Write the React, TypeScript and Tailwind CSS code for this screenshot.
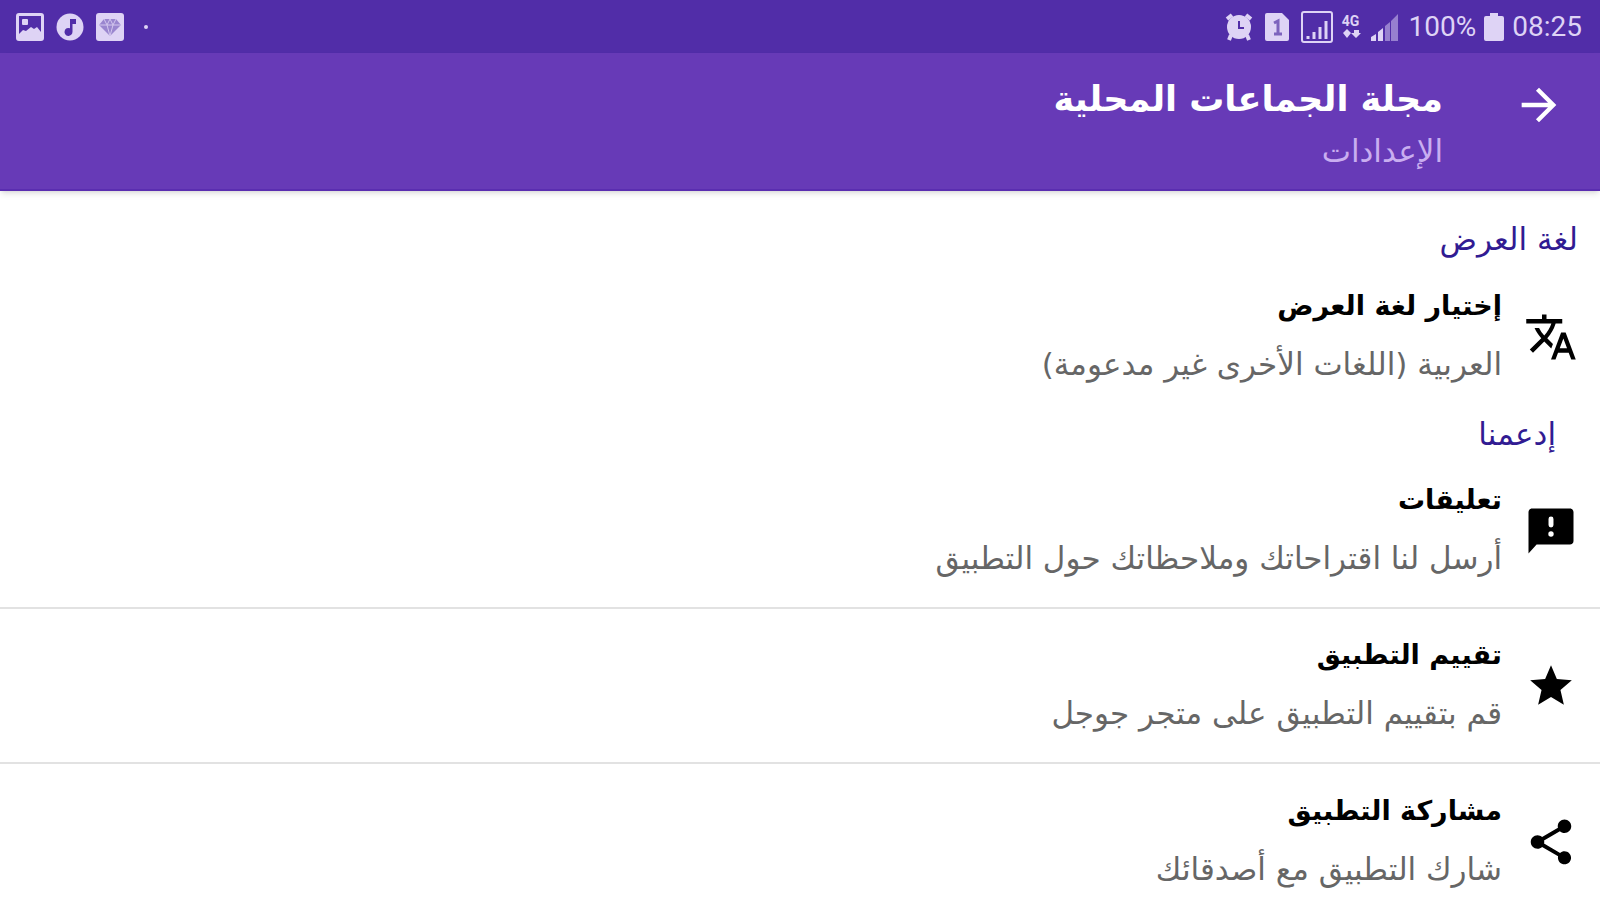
import type { ReactNode } from "react";
import { MdArrowForward, MdShare, MdStar, MdTranslate } from "react-icons/md";

type SettingItem = {
  title: string;
  summary: string;
  icon: ReactNode;
};

function FeedbackIcon() {
  return (
    <svg className="size-[54px]" viewBox="0 0 24 24">
      <path
        d="M20.400 2H3.600C2.700 2 2 2.700 2 3.600V22l3.600-4h14.800c.9 0 1.600-.7 1.600-1.600V3.600c0-.9-.7-1.600-1.600-1.600Z"
        fill="currentColor"
      />
      <path d="M12 6.700v2.600" stroke="white" strokeWidth="2.200" strokeLinecap="round" />
      <circle cx="12" cy="13.300" r="1.200" fill="white" />
    </svg>
  );
}

const displayItems: SettingItem[] = [
  {
    title: "إختيار لغة العرض",
    summary: "العربية (اللغات الأخرى غير مدعومة)",
    icon: <MdTranslate className="size-[54px]" />,
  },
];

const supportItems: SettingItem[] = [
  {
    title: "تعليقات",
    summary: "أرسل لنا اقتراحاتك وملاحظاتك حول التطبيق",
    icon: <FeedbackIcon />,
  },
  {
    title: "تقييم التطبيق",
    summary: "قم بتقييم التطبيق على متجر جوجل",
    icon: <MdStar className="mx-0.5 size-[50px]" />,
  },
  {
    title: "مشاركة التطبيق",
    summary: "شارك التطبيق مع أصدقائك",
    icon: <MdShare className="size-[54px]" />,
  },
];

function StatusBar() {
  return (
    <div
      dir="ltr"
      className="flex h-[53px] items-center justify-between bg-[#512da8] pr-[18px] pl-4 font-[Roboto,sans-serif] text-[28px] text-[#ded3f5]"
    >
      <div className="flex items-center gap-3">
        {/* Gallery */}
        <svg className="size-7" viewBox="0 0 28 28" fill="currentColor">
          <path
            fillRule="evenodd"
            d="M3 0h22a3 3 0 0 1 3 3v22a3 3 0 0 1-3 3H3a3 3 0 0 1-3-3V3a3 3 0 0 1 3-3Zm0 3v18l4-4 3 1 5-4 3 2 3-2 4 5V3Z"
          />
          <rect x="6" y="6" width="6" height="6" rx="1" />
        </svg>
        {/* Music */}
        <svg className="size-7" viewBox="0 0 28 28" fill="currentColor">
          <circle cx="14" cy="14" r="13.500" />
          <path d="M14 6v9.200a4 4 0 1 0 2.500 3.600V11h3.500V6Z" fill="#512da8" />
        </svg>
        {/* Gem */}
        <svg className="size-7" viewBox="0 0 28 28">
          <rect width="28" height="28" rx="3" fill="currentColor" />
          <path d="M8 6h12l5 6-11 11L3 12Z" fill="#9a86cf" />
          <path d="M3 12h22M8 6l3 6 3 11 3-11 3-6M11 12l3-6 3 6" stroke="#d3c6ee" fill="none" />
        </svg>
        <span className="ml-2 size-1 rounded-full bg-current" />
      </div>

      <div className="flex items-center gap-2">
        {/* Alarm */}
        <svg className="size-7" viewBox="0 0 28 28" fill="none" stroke="currentColor" strokeWidth="4">
          <circle cx="14" cy="14" r="12" fill="currentColor" stroke="none" />
          <path d="M2 6l5-4M26 6l-5-4M6 22l-2 5M22 22l2 5" />
          <path d="M14 8v7h5" stroke="#512da8" strokeWidth="2" />
        </svg>
        {/* SIM 1 */}
        <svg className="ml-1 h-7 w-6" viewBox="0 0 24 28">
          <path d="M2 0h15l7 7v19a2 2 0 0 1-2 2H2a2 2 0 0 1-2-2V2a2 2 0 0 1 2-2Z" fill="currentColor" />
          <path d="M9 10l4-2v13M9 21h8" stroke="#7d63bd" strokeWidth="3" fill="none" />
        </svg>
        {/* Boxed signal */}
        <svg className="ml-1 size-8" viewBox="0 0 32 32" fill="none" stroke="currentColor">
          <rect x="1" y="1" width="30" height="30" rx="2" strokeWidth="2" />
          <path d="M7 28v-3M13 28v-7M19 28V16M25 28V10" strokeWidth="3" />
        </svg>
        <div className="flex w-5 flex-col items-center text-sm leading-none font-bold">
          <span>4G</span>
          <svg className="h-3 w-5" viewBox="0 0 20 12" fill="currentColor">
            <path d="M6 1l4 4-4 5-4-5ZM15 10l-5-5h3V2h5v3h2Z" />
          </svg>
        </div>
        {/* Signal */}
        <svg className="h-7 w-8" viewBox="0 0 32 28" fill="currentColor">
          <path d="M2 28v-4l5-3v7ZM9 28v-9l5-4v13Z" />
          <path d="M16 28V13l5-4v19ZM22 28V8l7-7v27Z" opacity="0.5" />
        </svg>
        <span>100%</span>
        <svg className="h-7 w-5" viewBox="0 0 20 28" fill="currentColor">
          <path d="M6 0h8v3h4a2 2 0 0 1 2 2v21a2 2 0 0 1-2 2H2a2 2 0 0 1-2-2V5a2 2 0 0 1 2-2h4Z" />
        </svg>
        <span>08:25</span>
      </div>
    </div>
  );
}

function SettingRow({ item }: { item: SettingItem }) {
  return (
    <li className="h-[155px]">
      <button className="flex size-full items-center gap-[22px] px-[22px] text-start text-black">
        {item.icon}
        <span className="flex flex-col gap-3 pb-1">
          <span className="text-[27px] leading-[46px] font-bold">{item.title}</span>
          <span className="text-[31px] leading-[46px] text-[#666666]">{item.summary}</span>
        </span>
      </button>
    </li>
  );
}

export default function App() {
  return (
    <div dir="rtl" lang="ar" className="min-h-screen bg-white font-['DejaVu_Sans',sans-serif]">
      <StatusBar />

      <header className="flex h-[138px] items-start gap-[70px] border-b-2 border-[#5a2db0] bg-[#673ab7] px-[35px] pt-5 text-white shadow-md">
        <button aria-label="رجوع" className="pt-1.5">
          <MdArrowForward className="size-[52px]" />
        </button>
        <div>
          <h1 className="text-[35px] leading-[52px] font-bold">مجلة الجماعات المحلية</h1>
          <p className="text-[31px] leading-[52px] text-[#c9aef0]">الإعدادات</p>
        </div>
      </header>

      <main className="pt-7">
        <section>
          <h2 className="px-[22px] text-[31px] leading-10 text-[#311b92]">لغة العرض</h2>
          <ul>
            {displayItems.map((item) => (
              <SettingRow key={item.title} item={item} />
            ))}
          </ul>
        </section>

        <section>
          <h2 className="px-11 text-[31px] leading-10 text-[#311b92]">إدعمنا</h2>
          <ul className="divide-y-2 divide-[#e2e2e2]">
            {supportItems.map((item) => (
              <SettingRow key={item.title} item={item} />
            ))}
          </ul>
        </section>
      </main>
    </div>
  );
}
